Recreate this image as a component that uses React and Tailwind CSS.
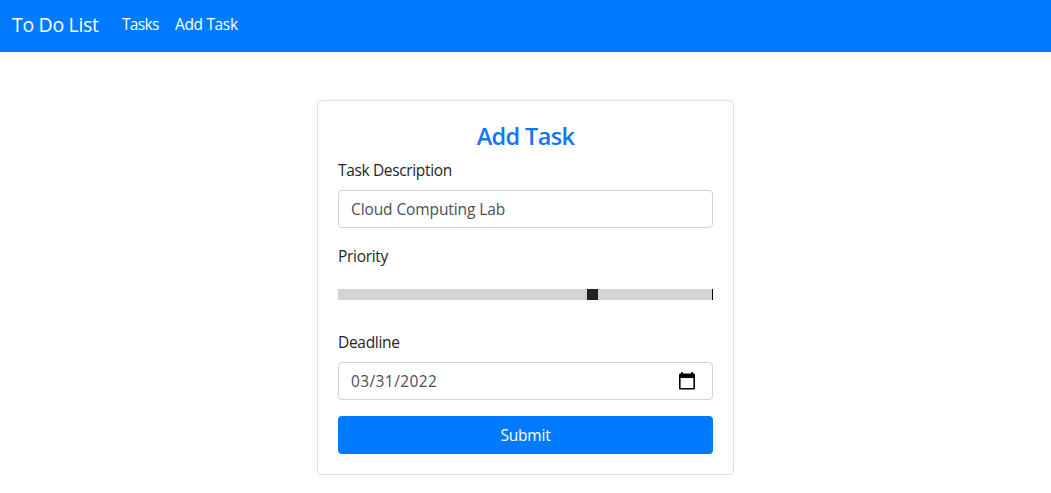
function Label({ children, className }) {
  return <label className={`block h-6 text-[15.5px] leading-6 ${className}`}>{children}</label>;
}

function CalendarIcon() {
  return (
    <svg width="16" height="18" viewBox="0 0 16 18" aria-hidden="true">
      <path fillRule="evenodd" d="M2.200 0h1.600v1.500h8.400V0h1.600v1.500h.9A1.300 1.300 0 0 1 16 2.800v13.400a1.300 1.300 0 0 1-1.300 1.300H1.300A1.300 1.300 0 0 1 0 16.200V2.800A1.300 1.300 0 0 1 1.300 1.500h.9zM1.600 6v9.900h12.800V6z" fill="#000" />
    </svg>
  );
}

export default function App() {
  return (
    <div className="min-h-screen bg-white font-['Open_Sans','Noto_Sans',sans-serif] text-[#212529]">
      <nav className="flex h-[52px] items-center bg-[#007bff] px-3 pb-[3px] text-white">
        <a className="w-[110px] text-[19.5px] leading-[30px] tracking-[-0.32px]">To Do List</a>
        <a className="w-[53px] text-[15.5px] tracking-[-0.7px]">Tasks</a>
        <a className="text-[15.5px] tracking-[-0.35px]">Add Task</a>
      </nav>
      <main className="mx-auto mt-12 h-[375px] w-[417px] rounded border border-[#dfdfdf] px-5 pt-5">
        <h1 className="h-[30px] text-center text-[23.5px] leading-[31px] font-semibold tracking-[-0.65px] text-[#1277ee]">Add Task</h1>
        <form className="mt-[7px]" onSubmit={(e) => e.preventDefault()}>
          <Label className="tracking-[-0.35px]">Task Description</Label>
          <input
            defaultValue="Cloud Computing Lab"
            className="mt-2 block h-[38px] w-full rounded border border-[#ced4da] px-3 text-[15.5px] tracking-[-0.1px] text-[#495057] outline-none"
          />
          <Label className="mt-4 tracking-[-0.3px]">Priority</Label>
          <div className="mt-[21px] flex h-[11px] bg-[#d3d3d3]">
            <div className="ml-[249px] w-[11px] bg-[#212121]" />
            <div className="ml-auto w-px bg-black" />
          </div>
          <Label className="mt-[30px] tracking-[-0.3px]">Deadline</Label>
          <div className="mt-2 flex h-[38px] items-center justify-between rounded border border-[#ced4da] pr-[17px] pl-3 text-[15.5px] text-[#495057]">
            <span className="pt-0.5 tracking-[0.4px]">03/31/2022</span>
            <CalendarIcon />
          </div>
          <button className="mt-4 block h-[38px] w-full rounded bg-[#007bff] pt-0.5 text-[15.5px] tracking-[-0.2px] text-white">Submit</button>
        </form>
      </main>
    </div>
  );
}
